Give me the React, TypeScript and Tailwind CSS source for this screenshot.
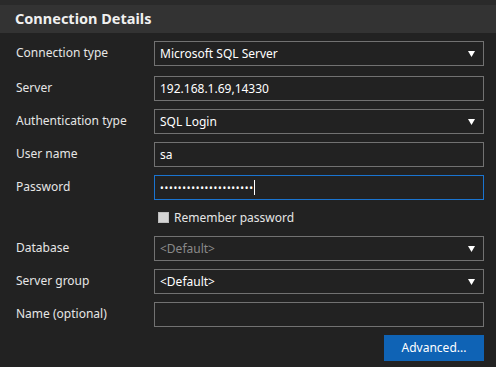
import React from "react";

const Arrow = () => (
  <svg width="7" height="6" viewBox="0 0 7 6" className="shrink-0">
    <polygon points="0,0 7,0 3.5,6" fill="#ffffff" />
  </svg>
);

const Row = ({ label, children, cls = "" }: { label: string; children: React.ReactNode; cls?: string }) => (
  <div className={`flex items-center h-[25px] ${cls}`}>
    <div className="w-[154px] shrink-0 pl-4 text-[12px] text-[#e6e6e6] leading-none -mt-[2px]">{label}</div>
    {children}
  </div>
);

const Box = ({ children, border = "border-[#727272]", arrow = false }: { children?: React.ReactNode; border?: string; arrow?: boolean }) => (
  <div className={`w-[330px] h-[25px] border ${border} bg-[#222222] flex items-center pl-[5px] pr-[8px] text-[12px] text-white`}>
    <div className="flex-1 flex items-center">{children}</div>
    {arrow && <Arrow />}
  </div>
);

export default function App() {
  return (
    <div className="w-[496px] h-[367px] bg-[#222222] overflow-hidden" style={{ fontFamily: '"Noto Sans", "Open Sans", sans-serif' }}>
      <div className="h-[5px] bg-[#2a2a2a]" />
      <div className="h-[28px] bg-[#333333] flex items-center pl-[15px] text-[14.5px] font-bold text-[#f0f0f0]">Connection Details</div>
      <div className="pt-[8px]">
        <Row label="Connection type">
          <Box arrow>Microsoft SQL Server</Box>
        </Row>
        <Row label="Server" cls="mt-[10px]">
          <Box>192.168.1.69,14330</Box>
        </Row>
        <Row label="Authentication type" cls="mt-[8px]">
          <Box arrow>SQL Login</Box>
        </Row>
        <Row label="User name" cls="mt-[8px]">
          <Box>sa</Box>
        </Row>
        <Row label="Password" cls="mt-[8px]">
          <Box border="border-[#1a74d0]">
            <span className="text-[10px] tracking-[0.7px] leading-none">•••••••••••••••••••••</span>
            <span className="w-px h-[15px] bg-white" />
          </Box>
        </Row>
        <div className="flex items-center h-[11px] mt-[12px] pl-[158px]">
          <div className="w-[11px] h-[11px] bg-[#d4d4d4] border border-[#bdbdbd]" />
          <span className="ml-[5px] text-[12px] text-[#e6e6e6] leading-none">Remember password</span>
        </div>
        <Row label="Database" cls="mt-[13px]">
          <Box arrow><span className="text-[#8a8a8a]">&lt;Default&gt;</span></Box>
        </Row>
        <Row label="Server group" cls="mt-[8px]">
          <Box arrow>&lt;Default&gt;</Box>
        </Row>
        <Row label="Name (optional)" cls="mt-[8px]">
          <Box />
        </Row>
        <div className="flex mt-[8px] pl-[384px]">
          <button className="w-[100px] h-[26px] bg-[#0f63b5] text-white text-[12px] leading-none">Advanced...</button>
        </div>
      </div>
    </div>
  );
}
